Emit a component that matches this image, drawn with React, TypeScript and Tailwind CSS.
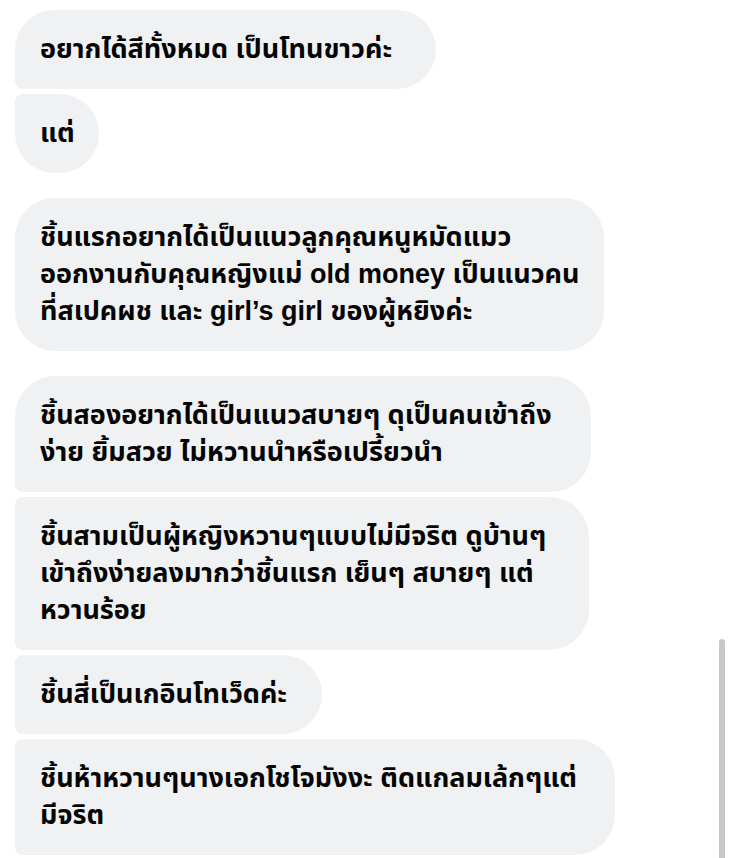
import React from "react";

type B = { lines: string[]; tl: string; bl: string; mt: string; w: string };

const bubbles: B[] = [
  { lines: ["อยากได้สีทั้งหมด เป็นโทนขาวค่ะ"], tl: "rounded-tl-[40px]", bl: "rounded-bl-[8px]", mt: "mt-[10px]", w: "w-[421px]" },
  { lines: ["แต่"], tl: "rounded-tl-[8px]", bl: "rounded-bl-[40px]", mt: "mt-[5px]", w: "w-[84px]" },
  {
    lines: [
      "ชิ้นแรกอยากได้เป็นแนวลูกคุณหนูหมัดแมว",
      "ออกงานกับคุณหญิงแม่ old money เป็นแนวคน",
      "ที่สเปคผช และ girl’s girl ของผู้หยิงค่ะ",
    ],
    tl: "rounded-tl-[40px]",
    bl: "rounded-bl-[40px]",
    mt: "mt-[25px]",
    w: "w-[589px]",
  },
  {
    lines: ["ชิ้นสองอยากได้เป็นแนวสบายๆ ดุเป็นคนเข้าถึง", "ง่าย ยิ้มสวย ไม่หวานนำหรือเปรี้ยวนำ"],
    tl: "rounded-tl-[40px]",
    bl: "rounded-bl-[8px]",
    mt: "mt-[25px]",
    w: "w-[576px]",
  },
  {
    lines: ["ชิ้นสามเป็นผู้หญิงหวานๆแบบไม่มีจริต ดูบ้านๆ", "เข้าถึงง่ายลงมากว่าชิ้นแรก เย็นๆ สบายๆ แต่", "หวานร้อย"],
    tl: "rounded-tl-[8px]",
    bl: "rounded-bl-[8px]",
    mt: "mt-[5px]",
    w: "w-[574px]",
  },
  { lines: ["ชิ้นสี่เป็นเกอินโทเว็ดค่ะ"], tl: "rounded-tl-[8px]", bl: "rounded-bl-[8px]", mt: "mt-[5px]", w: "w-[307px]" },
  {
    lines: ["ชิ้นห้าหวานๆนางเอกโชโจมังงะ ติดแกลมเล้กๆแต่", "มีจริต"],
    tl: "rounded-tl-[8px]",
    bl: "rounded-bl-[8px]",
    mt: "mt-[5px]",
    w: "w-[600px]",
  },
];

export default function App() {
  return (
    <div
      className="relative w-[731px] h-[858px] overflow-hidden bg-white"
      style={{ fontFamily: '"Liberation Sans", "Noto Sans Thai", "Noto Sans", sans-serif' }}
    >
      <div className="flex flex-col items-start pl-[15px]">
        {bubbles.map((b, i) => (
          <div
            key={i}
            className={`${b.mt} ${b.w} ${b.tl} ${b.bl} rounded-tr-[40px] rounded-br-[40px] bg-[#f0f1f3] pl-[25px] pr-[20px] py-[21px] text-[27px] leading-[37px] font-bold text-[#050505] whitespace-nowrap`}
          >
            {b.lines.map((l, j) => (
              <div key={j}>{l}</div>
            ))}
          </div>
        ))}
      </div>
      <div className="absolute left-[719px] top-[639px] w-[6px] h-[230px] rounded-full bg-[#c8c8c8]" />
    </div>
  );
}
